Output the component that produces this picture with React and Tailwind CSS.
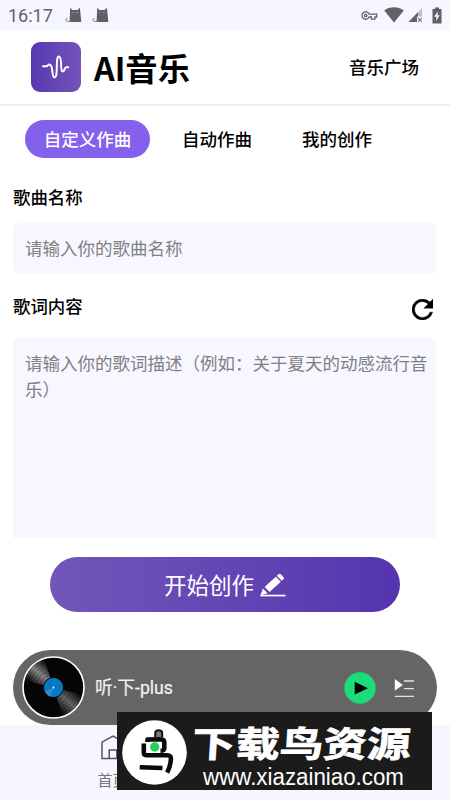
import React from 'react';

function CatIcon() {
  return (
    <svg className="h-[16px] w-[18px]" viewBox="0 0 18 16" fill="#5f6063">
      <path d="M5.2 0.8 7.4 3h5.2l2.3-2.2.6 6 .8 8.2H4.6z" />
      <path d="M6.5 14.4H3.2c-2.8 0-2.9-2.7-.9-3.1" fill="none" stroke="#77787b" strokeWidth="1" />
      <circle cx="8" cy="5.6" r="0.5" fill="#d5d6dc" />
      <circle cx="12" cy="5.6" r="0.5" fill="#d5d6dc" />
    </svg>
  );
}

function StatusBar() {
  return (
    <div className="flex h-[30px] shrink-0 items-center justify-between bg-[#f5f6ff] pl-[8px] pr-[8px] text-[#626366]">
      <div className="flex items-center">
        <span className="w-[57px] pt-[2px] font-[Roboto] text-[18px] leading-[28px]">16:17</span>
        <CatIcon />
        <span className="w-[9px]" />
        <CatIcon />
      </div>
      <div className="flex items-center">
        <svg className="mr-[6px] h-[9px] w-[17px]" viewBox="0 0 16 9" fill="none" stroke="#626366" strokeWidth="1.3">
          <path d="M7.6 3.1A3.7 3.7 0 1 0 7.6 6h2.3v2.2h3.5V6h1.8V3.1z" />
          <circle cx="4.2" cy="4.5" r="1.2" />
        </svg>
        <svg className="mr-[4px] h-[16px] w-[20px]" viewBox="0 0 20 16" fill="#626366">
          <path d="M.2 3.4C5.6-.7 14.2-.7 19.8 3.4L10 15.4z" />
        </svg>
        <svg className="mr-[9px] h-[16px] w-[15px]" viewBox="0 0 15 16">
          <path d="M14 1v14H.5z" fill="#c0c1c7" />
          <path d="M10 5.2V15H.5z" fill="#626366" />
          <path d="M9 9.5h6V16H9z" fill="#f5f6ff" />
          <path d="m10 10.8 3.8 3.8m0-3.8L10 14.6" stroke="#77787b" strokeWidth="1.1" />
        </svg>
        <svg className="h-[17px] w-[10px]" viewBox="0 0 10 17">
          <path d="M3 .5h4V2h2.5v14.5h-9V2H3z" fill="#5f6063" />
          <path d="M5.8 4.3 2.2 9.7h2.2l-.5 4.2 3.9-5.7H5.6z" fill="#f5f6ff" />
        </svg>
      </div>
    </div>
  );
}

function Header() {
  return (
    <header className="flex h-[76px] shrink-0 items-center border-b-2 border-[#f1f1f2] bg-white pl-[31px] pr-[31px]">
      <div className="flex size-[50px] items-center justify-center rounded-[9px] bg-linear-to-r from-[#5838b1] to-[#7453b8]">
        <svg className="size-[28px]" viewBox="0 0 28 28" fill="none" stroke="white" strokeWidth="2" strokeLinecap="round" strokeLinejoin="round">
          <path d="M1 13.3h3.2c1.5 0 1.6-1.8 3.3-1.8 4.2 0 1.6 12.9 5 12.9 4.2 0 .6-21 4.3-21 4 0 .8 15.2 3.8 15.2 2.2 0 1.6-4.3 3.6-4.3h2" />
        </svg>
      </div>
      <h1 className="ml-[13px] text-[32.3px] font-bold leading-[50px] text-black">AI音乐</h1>
      <span className="ml-auto text-[17.5px] font-medium text-black">音乐广场</span>
    </header>
  );
}

function Disc() {
  return (
    <svg className="size-[63px]" viewBox="0 0 62 62">
      <defs>
        <linearGradient id="shineTop" gradientUnits="userSpaceOnUse" x1="5" y1="24" x2="22" y2="4">
          <stop stopColor="#050505" />
          <stop offset=".5" stopColor="#858585" />
          <stop offset="1" stopColor="#050505" />
        </linearGradient>
        <linearGradient id="shineBottom" gradientUnits="userSpaceOnUse" x1="40" y1="58" x2="58" y2="38">
          <stop stopColor="#050505" />
          <stop offset=".5" stopColor="#666" />
          <stop offset="1" stopColor="#050505" />
        </linearGradient>
      </defs>
      <circle cx="31" cy="31" r="30" fill="#050505" stroke="white" strokeWidth="1.6" />
      <path d="M31 31 2.9 24A29 29 0 0 1 22 3.4z" fill="url(#shineTop)" />
      <path d="m31 31 28 7A29 29 0 0 1 40 58.6z" fill="url(#shineBottom)" />
      <g fill="none" stroke="#050505" strokeWidth=".5" opacity=".6">
        <circle cx="31" cy="31" r="13" />
        <circle cx="31" cy="31" r="17" />
        <circle cx="31" cy="31" r="20" strokeDasharray="2 1" />
        <circle cx="31" cy="31" r="23" strokeDasharray="2 1" />
        <circle cx="31" cy="31" r="26" strokeDasharray="2 1" />
      </g>
      <circle cx="31" cy="31" r="10.3" fill="#050505" />
      <circle cx="31" cy="31" r="9.5" fill="#0878c4" />
      <path d="m31 31-8.5 4A9.4 9.4 0 0 0 28 40z" fill="#278dcf" />
      <circle cx="31" cy="31" r=".9" fill="white" />
    </svg>
  );
}

function Player() {
  return (
    <div className="mx-[13px] flex h-[75px] shrink-0 items-center rounded-full bg-[#656565] pl-[9px] pr-[23px]">
      <Disc />
      <span className="ml-[10px] pt-[2px] font-[Roboto,'Noto_Sans_CJK_SC',sans-serif] text-[17.7px] text-[#f3f3f3] [-webkit-text-stroke:0.2px_#f3f3f3]">听·下-plus</span>
      <svg className="ml-auto size-[32px]" viewBox="0 0 32 32">
        <circle cx="16" cy="16" r="15.7" fill="#1bdc7b" />
        <path d="m10.7 9.8 13.3 6.4-13.3 6.4z" fill="black" />
      </svg>
      <svg className="ml-[18px] h-[20px] w-[20px]" viewBox="0 0 20 20">
        <path d="M.8 1 8.8 7l-8 5.8z" fill="white" />
        <path d="M10 3h10M10 10.6h10M.8 18.3H20" stroke="#e1e1e1" strokeWidth="1.3" />
      </svg>
    </div>
  );
}

function Watermark() {
  return (
    <div className="absolute left-[117px] top-[712px] flex h-[78px] w-[315px] items-start bg-[#1b1b1b] pl-[5px] pt-[8px]">
      <svg className="size-[65px] shrink-0" viewBox="-1 0 65 65">
        <circle cx="31.5" cy="32.5" r="32.3" fill="white" />
        <g fill="none" stroke="#0b0b0b" strokeWidth="4.6" strokeLinejoin="round">
          <path d="M24.5 22v-2.5L37 19.2q4.3 0 4.3 3V28q0 2.7-3.8 2.7" />
          <path d="M20.8 23.5v9q0 2.8 3 2.8h20.5q4 0 3.6 3.8c-.3 5-1.2 8.8-3.8 13.6" />
          <path d="M16.7 47.2 39.5 48" />
        </g>
        <path d="M32.2 17v-3.5c0-4.2 7-4.2 7 0V17" fill="#777" stroke="#111" strokeWidth="2" />
        <circle cx="31.7" cy="27" r="4.7" fill="#24d25a" />
      </svg>
      <div className="ml-[2px] flex w-[226px] flex-col items-center text-white">
        <span className="mt-[1px] origin-center -skew-x-3 scale-x-[1.23] whitespace-nowrap text-[35.5px] font-bold leading-[42px] [-webkit-text-stroke:0.8px_white]">下载鸟资源</span>
        <span className="mt-[2px] origin-center scale-x-[0.97] whitespace-nowrap pl-[3px] font-['Liberation_Sans',sans-serif] text-[23px] leading-[24px]">www.xiazainiao.com</span>
      </div>
    </div>
  );
}

export default function App() {
  return (
    <div className="relative flex h-[800px] w-[450px] flex-col overflow-hidden bg-white font-['Noto_Sans_CJK_SC',sans-serif] text-black">
      <StatusBar />
      <Header />
      <nav className="flex h-[66px] shrink-0 items-center pl-[25px] text-[17.5px] font-medium">
        <button className="h-[38px] w-[125px] rounded-full bg-[#8460ed] text-white">自定义作曲</button>
        <button className="ml-[32px]">自动作曲</button>
        <button className="ml-[50px]">我的创作</button>
      </nav>
      <main className="flex h-[366px] shrink-0 flex-col pl-[13px] pr-[14px]">
        <h2 className="h-[51px] pt-[12px] text-[17.4px] font-medium leading-[26px]">歌曲名称</h2>
        <div className="flex h-[51px] shrink-0 items-center rounded-[6px] bg-[#f6f7ff] pl-[12px] text-[17.5px] text-[#808084]">请输入你的歌曲名称</div>
        <div className="flex h-[63px] shrink-0 items-start justify-between pt-[19px] text-[17.4px] font-medium leading-[26px]">
          <h2>歌词内容</h2>
          <svg className="mr-[3.5px] mt-[6px] size-[21px]" viewBox="4 4 16 16" fill="black" stroke="black" strokeWidth=".3">
            <path d="M17.65 6.35A7.96 7.96 0 0 0 12 4a8 8 0 1 0 7.73 10h-2.08A6 6 0 1 1 12 6c1.66 0 3.14.69 4.22 1.78L13 11h7V4z" />
          </svg>
        </div>
        <div className="h-[201px] shrink-0 rounded-t-[6px] bg-[#f6f7ff] pl-[12px] pt-[13px] text-[17.5px] leading-[26px] text-[#808084]">请输入你的歌词描述（例如：关于夏天的动感流行音乐）</div>
      </main>
      <button className="mx-[50px] mt-[19px] flex h-[55px] shrink-0 items-center justify-center rounded-full bg-linear-to-r from-[#7356b8] to-[#5534af] text-[22.5px] text-white">
        开始创作
        <svg className="ml-[6px] h-[24px] w-[26px]" viewBox="0 0 26 24" fill="white">
          <path d="M.5 22.2 3 15.6l4.6 4.6z" />
          <path d="m4.6 14 11.2-10.2 5 5L9.6 18.9z" />
          <path d="m16.8 2.8 1.6-1.6c.8-.8 1.7-.7 2.4.1l2.6 2.6c.8.9.8 1.5 0 2.3l-1.6 1.6z" />
          <path d="M.5 21.7h25v1.7H.5z" />
        </svg>
      </button>
      <div className="h-[38px] shrink-0" />
      <Player />
      <footer className="grid h-[75px] shrink-0 grid-cols-2 bg-[#f5f6ff]">
        <div className="flex flex-col items-center pt-[10px] text-[#77777d]">
          <svg className="h-[25px] w-[24px]" viewBox="0 0 24 25" fill="none" stroke="#55565b" strokeWidth="1.5">
            <path d="M1 23.5V7.2L12 1l11 6.2v16.3z" />
            <path d="M8.2 23.5V15h7.6v8.5" />
          </svg>
          <span className="mt-[9px] text-[15px] leading-[22px]">首页</span>
        </div>
      </footer>
      <Watermark />
    </div>
  );
}
